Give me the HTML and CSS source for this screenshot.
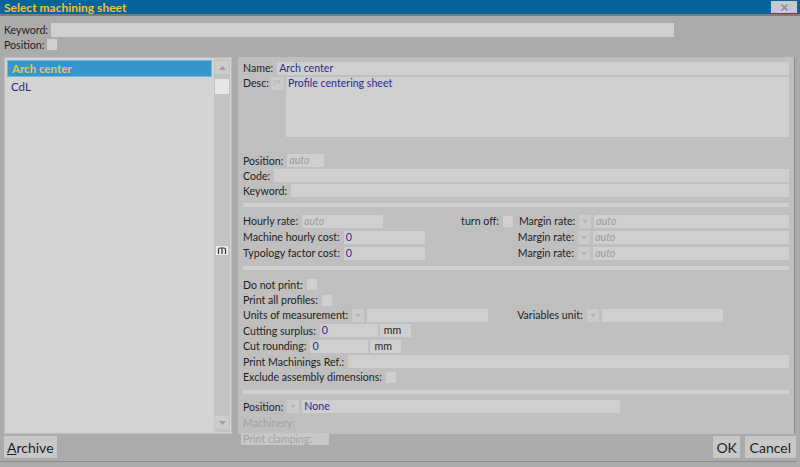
FILE: index.html
```html
<!DOCTYPE html>
<html lang="en">
<head>
    <meta charset="UTF-8">
    <title>Select machining sheet</title>
    <link rel="stylesheet" href="styles.css">
</head>
<body>
<div class="window">
    <!-- Title bar -->
    <div class="titlebar">
        <span class="title">Select machining sheet</span>
        <span class="close">
            <svg width="9" height="9" viewBox="0 0 9 9"><path d="M1.5 1.5 L7.5 7.5 M7.5 1.5 L1.5 7.5" stroke="#8a8a8a" stroke-width="1.6"/></svg>
        </span>
    </div>

    <!-- Filter -->
    <div class="filter">
        <div class="frow"><span class="lbl">Keyword:</span><span class="field kw"></span></div>
        <div class="frow"><span class="lbl">Position:</span><span class="check"></span></div>
    </div>

    <div class="main">
        <!-- List of sheets -->
        <div class="listpane">
            <ul class="list">
                <li class="sel">Arch center</li>
                <li>CdL</li>
            </ul>
            <div class="scrollbar">
                <span class="sbtn"><svg width="7" height="4" viewBox="0 0 7 4"><path d="M0 4 L3.5 0 L7 4Z" fill="#9e9e9e"/></svg></span>
                <span class="thumb"></span>
                <span class="grip"><svg width="10" height="8" viewBox="0 0 10 8"><path d="M1.5 7 V2.5 Q1.5 1 3.2 1 H6.8 Q8.5 1 8.5 2.5 V7 M5 1 V7" stroke="#333" stroke-width="1.2" fill="none"/></svg></span>
                <span class="sbtn bottom"><svg width="7" height="4" viewBox="0 0 7 4"><path d="M0 0 L3.5 4 L7 0Z" fill="#9e9e9e"/></svg></span>
            </div>
        </div>

        <!-- Detail -->
        <div class="detail">
            <div class="row"><span class="lbl">Name:</span><span class="field grow val">Arch center</span></div>
            <div class="row desc">
                <span class="lbl">Desc:</span>
                <span class="mini"><svg width="9" height="7" viewBox="0 0 9 7"><path d="M1 1 H8 M1 1 V6 M4 1 V4 M6.5 1 V4" stroke="#b4b4b4" stroke-width="1" fill="none"/></svg></span>
                <span class="field grow area val">Profile centering sheet</span>
            </div>
            <div class="row first"><span class="lbl">Position:</span><span class="field w36 ph">auto</span></div>
            <div class="row"><span class="lbl">Code:</span><span class="field grow"></span></div>
            <div class="row"><span class="lbl">Keyword:</span><span class="field grow"></span></div>
            <div class="sep"></div>

            <div class="row r16">
                <span class="lbl">Hourly rate:</span><span class="field w81 ph">auto</span>
                <span class="spacer1"></span>
                <span class="lbl">turn off:</span><span class="check"></span>
                <span class="lbl ml6">Margin rate:</span><span class="drop"></span><span class="field grow ph">auto</span>
            </div>
            <div class="row r16">
                <span class="lbl">Machine hourly cost:</span><span class="field w81 val">0</span>
                <span class="lbl push">Margin rate:</span><span class="drop"></span><span class="field grow ph">auto</span>
            </div>
            <div class="row r16">
                <span class="lbl">Typology factor cost:</span><span class="field w81 val">0</span>
                <span class="lbl push">Margin rate:</span><span class="drop"></span><span class="field grow ph">auto</span>
            </div>
            <div class="sep s2"></div>

            <div class="row r15 top3"><span class="lbl">Do not print:</span><span class="check"></span></div>
            <div class="row r15"><span class="lbl">Print all profiles:</span><span class="check"></span></div>
            <div class="row r15">
                <span class="lbl">Units of measurement:</span><span class="drop"></span><span class="field w121"></span>
                <span class="lbl unit">Variables unit:</span><span class="drop"></span><span class="field w121"></span>
            </div>
            <div class="row r15"><span class="lbl">Cutting surplus:</span><span class="field w58 val">0</span><span class="field w31 mm">mm</span></div>
            <div class="row r15"><span class="lbl">Cut rounding:</span><span class="field w58 val">0</span><span class="field w31 mm">mm</span></div>
            <div class="row r15"><span class="lbl">Print Machinings Ref.:</span><span class="field grow"></span></div>
            <div class="row r15"><span class="lbl">Exclude assembly dimensions:</span><span class="check"></span></div>
            <div class="sep s3"></div>

            <div class="row r16"><span class="lbl">Position:</span><span class="drop"></span><span class="field w318 val">None</span></div>
            <div class="row r16 off"><span class="lbl">Machinery:</span></div>
            <div class="row r16 off"><span class="lbl clamp">Print clamping:</span></div>
        </div>
    </div>

    <!-- Buttons -->
    <div class="footer">
        <button class="btn"><u>A</u>rchive</button>
        <span class="right">
            <button class="btn">OK</button>
            <button class="btn wide">Cancel</button>
        </span>
    </div>
    <div class="bottomline"></div>
</div>
</body>
</html>
```

FILE: styles.css
```css
body {
    margin: 0;
    font-family: Lato, "Open Sans", sans-serif;
    font-size: 10.6px;
    color: #1e1e1e;
    background-color: #ababab;
}
.window {
    width: 800px;
    height: 467px;
    overflow: hidden;
    display: flex;
    flex-direction: column;
}
.titlebar {
    height: 14px;
    background-color: #06649a;
    border-bottom: 2px solid #7c7c7c;
    display: flex;
    align-items: center;
    justify-content: space-between;
    padding-left: 4px;
    flex-shrink: 0;
}
.title {
    color: #f3c13b;
    font-weight: bold;
    font-size: 12px;
}
.close {
    width: 26px;
    height: 12px;
    margin-right: 3px;
    background-color: #c9c9c9;
    display: flex;
    align-items: center;
    justify-content: center;
}

/* generic pieces */
.lbl {
    white-space: nowrap;
    margin-right: 4px;
}
.field {
    height: 13px;
    line-height: 13px;
    background-color: #cfcfcf;
    padding-left: 2px;
    box-sizing: border-box;
    white-space: nowrap;
}
.val { color: #2a2a90; }
.ph { color: #9b9b9b; font-style: italic; }
.check {
    width: 10px;
    height: 11px;
    background-color: #cfcfcf;
}
.drop {
    width: 12px;
    height: 13px;
    margin-right: 3px;
    background-color: #cbcbcb;
    position: relative;
}
.drop::after {
    content: "";
    position: absolute;
    left: 3px;
    top: 5px;
    border-left: 3px solid transparent;
    border-right: 3px solid transparent;
    border-top: 3px solid #b2b2b2;
}
.grow { flex: 1; }

/* filter */
.filter { padding: 6px 4px 0; flex-shrink: 0; }
.frow {
    display: flex;
    align-items: center;
    height: 15px;
}
.frow .lbl { margin-right: 3px; }
.kw { width: 623px; height: 14px; }

/* main area */
.main {
    display: flex;
    margin-top: 5px;
    height: 377px;
    padding: 0 5px 0 4px;
    flex-shrink: 0;
}
.listpane {
    width: 228px;
    display: flex;
    background-color: #d3d3d3;
    border: 1px solid #bcbcbc;
    box-sizing: border-box;
}
.list {
    flex: 1;
    list-style: none;
    margin: 0;
    padding: 2px 2px 0 2px;
}
.list li {
    height: 15px;
    line-height: 15px;
    padding-left: 4px;
    margin-bottom: 2px;
    color: #2a2a8a;
    font-size: 11.5px;
}
.list li.sel {
    background-color: #3397cc;
    border: 1px solid #6cb8e0;
    color: #f2c14a;
    font-weight: bold;
}
.scrollbar {
    width: 16px;
    margin: 1px 1px 1px 0;
    background-color: #c3c3c3;
    display: flex;
    flex-direction: column;
    align-items: center;
    position: relative;
}
.sbtn {
    width: 14px;
    height: 13px;
    margin-top: 2px;
    background-color: #cdcdcd;
    display: flex;
    align-items: center;
    justify-content: center;
}
.sbtn.bottom {
    margin-top: auto;
    margin-bottom: 3px;
}
.thumb {
    width: 14px;
    height: 15px;
    margin-top: 5px;
    background-color: #e6e6e6;
}
.grip {
    position: absolute;
    top: 187px;
    left: 2px;
    width: 12px;
    height: 9px;
    background-color: #ececec;
    display: flex;
    align-items: center;
    justify-content: center;
}

/* detail panel */
.detail {
    flex: 1;
    margin-left: 6px;
    padding: 4px 5px 0 5px;
    background-color: #bfbfbf;
    border-right: 1px solid #8e8e8e;
    display: flex;
    flex-direction: column;
}
.row {
    display: flex;
    align-items: center;
    height: 15px;
    flex-shrink: 0;
}
.row:first-child { height: 14px; margin-bottom: 2px; }
.row.desc {
    height: 60px;
    align-items: flex-start;
    margin-bottom: 16px;
}
.row.desc .lbl { margin-right: 2px; }
.mini {
    width: 13px;
    height: 13px;
    margin-right: 2px;
    background-color: #cbcbcb;
    display: flex;
    align-items: center;
    justify-content: center;
}
.area {
    height: 60px;
    line-height: 13px;
}
.sep {
    height: 4px;
    margin: 5px 0 6px;
    background-color: #d1d1d1;
    flex-shrink: 0;
}
.s2 { margin: 5px 0 4px; }
.s3 { margin: 5px 0 5px; }
.r16 { height: 16px; }
.r15 { height: 15.4px; }
.top3 { margin-top: 3px; }
.w36 { width: 37px; }
.w81 { width: 81px; }
.w58 { width: 58px; margin-right: 2px; }
.w31 { width: 31px; }
.w121 { width: 121px; }
.w318 { width: 318px; }
.mm { padding-left: 4px; }
.spacer1 { width: 78px; }
.ml6 { margin-left: 6px; }
.push { margin-left: 93px; }
.unit { margin-left: 29px; }
.off { color: #a2a2a2; }
.clamp {
    background-color: #c8c8c8;
    padding: 0 2px;
    margin-left: -2px;
    width: 84px;
    height: 12px;
    line-height: 12px;
}

/* footer */
.footer {
    display: flex;
    justify-content: space-between;
    padding: 2px 4px 0 4px;
    height: 25px;
    flex-shrink: 0;
}
.btn {
    font-family: Lato, "Open Sans", sans-serif;
    font-size: 14px;
    color: #1e1e1e;
    background-color: #c8c8c8;
    border: none;
    height: 22px;
    padding: 0 3px;
    margin: 0;
}
.right .btn { margin-left: 2px; }
.btn.wide { padding: 0 5px; }
.bottomline {
    height: 1px;
    background-color: #8c8c8c;
    margin-right: 3px;
}
```
